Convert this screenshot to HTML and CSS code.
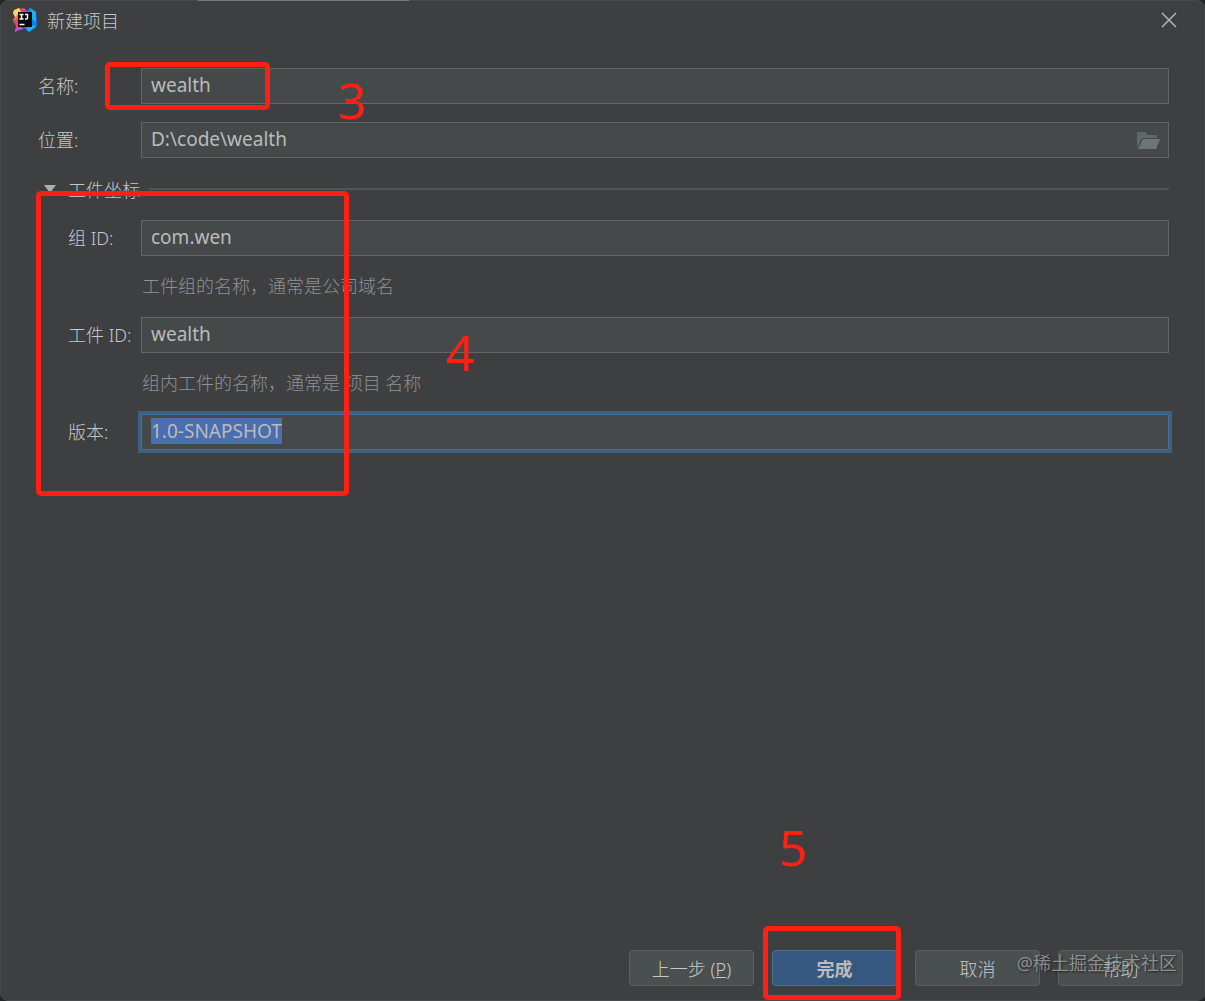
FILE: index.html
```
<!DOCTYPE html>
<html lang="zh-CN">
<head>
  <meta charset="UTF-8">
  <meta name="viewport" content="width=device-width, initial-scale=1.0">
  <title>新建项目</title>
  <link rel="stylesheet" href="styles.css">
</head>
<body>
  <div class="dialog">
    <header class="title-bar">
      <svg class="logo" viewBox="0 0 24 24" aria-hidden="true">
        <path fill="#fc801d" d="M0 4 6 0l5 5-4 9-4 2-3-4 2-3z"/>
        <path fill="#fdd35b" d="M1 2 6 0l2 3-6 6-2-4z"/>
        <path fill="#e8407c" d="M7 1l4-1 4 4-6 3zM0 13l5-3 3 9-6 5 1-6z"/>
        <path fill="#b457d8" d="M2 22l4-5 5 4-5 1-4 2z"/>
        <path fill="#0a7ff0" d="M12 4l5-4 6 4 1 14-8 6-5-4z"/>
        <path fill="#16b0f5" d="M17 0l6 4v10l-4-3zM13 20l8-3 2 2-7 5z"/>
        <path fill="#0b0608" d="M5 4h14v15H5z"/>
        <path fill="none" stroke="#fff" stroke-width="1.5" d="M6.500 6.500h4M8.500 6v5M6.500 11h4M12 6.500h2.500v3.500q0 1-1 1H12M6.500 16.500h5"/>
      </svg>
      <h1>新建项目</h1>
      <button class="close" type="button" aria-label="关闭">
        <svg viewBox="0 0 16 16"><path d="M1 1l14 14M15 1 1 15"/></svg>
      </button>
    </header>

    <form class="form" onsubmit="return false">
      <div class="row">
        <label for="name">名称:</label>
        <input type="text" id="name" value="wealth">
        <div class="mark mark-name"></div>
        <span class="step step-name">3</span>
      </div>
      <div class="row">
        <label for="location">位置:</label>
        <input type="text" id="location" value="D:\code\wealth">
        <button class="browse" type="button" aria-label="浏览">
          <svg viewBox="0 0 23 17">
            <path fill="#5f6769" d="M0 0h8l3 3h9v3H5L0 16z"/>
            <path fill="#6c7678" d="M6 7h17l-4 10H1z"/>
          </svg>
        </button>
      </div>

      <section class="artifact">
        <h2><svg class="arrow" viewBox="0 0 12 8"><path d="M0 0h12L6 8z"/></svg>工件坐标</h2>
        <div class="row">
          <label for="groupId">组 ID:</label>
          <input type="text" id="groupId" value="com.wen">
        </div>
        <p class="hint">工件组的名称，通常是公司域名</p>
        <div class="row">
          <label for="artifactId">工件 ID:</label>
          <input type="text" id="artifactId" value="wealth">
        </div>
        <p class="hint">组内工件的名称，通常是 项目 名称</p>
        <div class="row">
          <label for="version">版本:</label>
          <input type="text" id="version" value="1.0-SNAPSHOT">
        </div>
        <div class="mark mark-artifact"></div>
        <span class="step step-artifact">4</span>
      </section>
    </form>

    <footer class="actions">
      <button type="button">上一步 (<u>P</u>)</button>
      <div class="finish">
        <button type="button" class="primary">完成</button>
        <div class="mark mark-finish"></div>
        <span class="step step-finish">5</span>
      </div>
      <button type="button">取消</button>
      <button type="button">帮助</button>
      <span class="watermark">@稀土掘金技术社区</span>
    </footer>
  </div>

  <script>
    // Start on the version field with its value selected
    const version = document.getElementById('version');
    version.focus();
    version.select();
  </script>
</body>
</html>
```
FILE: styles.css
```
:root {
  --background-color: #3d3f41;
  --field-bg: #45494a;
  --text-color: #bbbbbb;
  --label-color: #c8c8c8;
  --mark-color: #ff2015;
}

* {
  box-sizing: border-box;
}

body {
  margin: 0;
  background-color: #242527;
  color: var(--text-color);
  font-family: "Noto Sans", "Noto Sans CJK SC", sans-serif;
  font-size: 18px;
}

h1, h2, p {
  margin: 0;
  font-size: 18px;
  font-weight: 300;
}

h1, h2, label {
  color: var(--label-color);
}

button, input {
  font-family: inherit;
  font-size: 18px;
  color: inherit;
}

.dialog {
  position: relative;
  display: flex;
  flex-direction: column;
  min-height: 100vh;
  background-color: var(--background-color);
  border: 1px solid #48494b;
  border-radius: 8px;
}

/* light strip on the top edge of the window */
.dialog::before {
  content: "";
  position: absolute;
  top: -1px;
  left: 197px;
  width: 211px;
  height: 1px;
  background-color: #77797a;
}

.title-bar {
  display: flex;
  align-items: center;
  height: 38px;
  padding: 0 27px 0 12px;
}

.logo {
  width: 24px;
  height: 24px;
  margin-right: 10px;
}

.close {
  display: flex;
  margin-left: auto;
  padding: 0;
  border: none;
  background: none;
}

.close svg {
  width: 16px;
  height: 16px;
  fill: none;
  stroke: #b5b5b5;
  stroke-width: 1.5;
}

.form {
  padding: 29px 35px 0 37px;
}

.row {
  position: relative;
  display: flex;
  align-items: center;
}

.row + .row {
  margin-top: 18px;
}

.row label {
  width: 103px;
  padding-bottom: 3px;
  font-weight: 300;
}

.row input {
  flex: 1;
  min-width: 0;
  height: 36px;
  padding: 0 9px 2px;
  border: 1px solid #646464;
  border-radius: 0;
  background-color: var(--field-bg);
  font-size: 19px;
  outline: none;
}

.row input:focus {
  border-color: #466d94;
  box-shadow: 0 0 0 3px #3d6185;
}

.row input::selection {
  background-color: #4b6eaf;
  color: var(--text-color);
}

.browse {
  position: absolute;
  right: 9px;
  display: flex;
  padding: 0;
  border: none;
  background: none;
}

.browse svg {
  width: 23px;
  height: 17px;
}

.artifact {
  position: relative;
  padding-left: 30px;
}

.artifact h2 {
  display: flex;
  align-items: center;
  height: 62px;
  margin-left: -24px;
}

.artifact h2::after {
  content: "";
  flex: 1;
  height: 2px;
  margin-left: 9px;
  background-color: #515355;
}

.arrow {
  width: 12px;
  height: 8px;
  margin-right: 12px;
  fill: #adadad;
}

.artifact .row label {
  width: 73px;
}

.hint {
  padding-left: 74px;
  line-height: 61px;
  color: #919191;
}

/* red frames and step numbers over the form */
.mark {
  position: absolute;
  border: 5px solid var(--mark-color);
  border-radius: 5px;
  pointer-events: none;
}

.mark-name {
  top: -6px;
  left: 67px;
  width: 165px;
  height: 48px;
}

.mark-artifact {
  top: 33px;
  left: -2px;
  width: 313px;
  height: 305px;
}

.mark-finish {
  inset: -24px -4px -14px -9px;
}

.step {
  position: absolute;
  color: var(--mark-color);
  font-size: 50px;
  line-height: 52px;
}

.step-name {
  top: 6px;
  left: 300px;
}

.step-artifact {
  top: 168px;
  left: 408px;
}

.step-finish {
  top: -129px;
  left: 7px;
}

.actions {
  position: relative;
  display: flex;
  justify-content: flex-end;
  gap: 18px;
  margin-top: auto;
  padding: 24px 21px 14px;
}

.actions button {
  width: 125px;
  height: 36px;
  padding: 0;
  border: 1px solid #5e6060;
  border-radius: 4px;
  background-color: #4a4f50;
  color: var(--label-color);
  font-weight: 300;
}

.actions .primary {
  border-color: #4c708c;
  background-color: #365880;
  color: var(--text-color);
  font-weight: 700;
}

.finish {
  position: relative;
}

.watermark {
  position: absolute;
  right: 27px;
  bottom: 24px;
  color: rgba(200, 200, 200, 0.6);
  line-height: 26px;
  text-shadow: 1px 1px 2px #222;
}
```
